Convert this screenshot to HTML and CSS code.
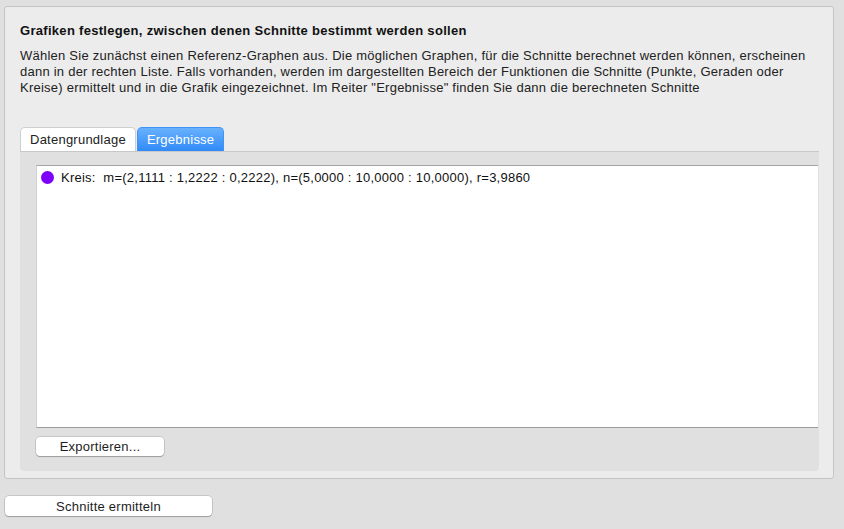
FILE: index.html
```
<html>
	<head>
		<link rel="stylesheet" href="styles.css">
	</head>
	<body>
		<div class="panel">
			<div class="panel__title">Grafiken festlegen, zwischen denen Schnitte bestimmt werden sollen</div>
			<div class="panel__text">Wählen Sie zunächst einen Referenz-Graphen aus. Die möglichen Graphen, für die Schnitte berechnet werden können, erscheinen<br>dann in der rechten Liste. Falls vorhanden, werden im dargestellten Bereich der Funktionen die Schnitte (Punkte, Geraden oder<br>Kreise) ermittelt und in die Grafik eingezeichnet. Im Reiter "Ergebnisse" finden Sie dann die berechneten Schnitte</div>
			<div class="tabs">
				<div class="tab">Datengrundlage</div>
				<div class="tab tab--active">Ergebnisse</div>
			</div>
			<div class="tab-panel">
				<div class="result-list">
					<div class="result-item">
						<span class="result-item__dot"></span>
						<span>Kreis:&nbsp; m=(2,1111 : 1,2222 : 0,2222), n=(5,0000 : 10,0000 : 10,0000), r=3,9860</span>
					</div>
				</div>
				<button type="button" class="push-button push-button--export">Exportieren...</button>
			</div>
		</div>
		<button type="button" class="push-button push-button--run">Schnitte ermitteln</button>
	</body>
</html>
```

FILE: styles.css
```
body {
	margin: 0;
	background: #e0e0e0;
	font-family: "Liberation Sans", Arial, sans-serif;
	font-size: 13px;
	letter-spacing: 0.24px;
	color: #1d1d1d;
}
.panel {
	box-sizing: border-box;
	margin: 6px 0 0 4px;
	width: 830px;
	height: 473px;
	padding: 16px 14px 0 15px;
	background: #ececec;
	border: 1px solid #c4c4c4;
	border-radius: 3px;
}
.panel__title {
	font-weight: bold;
	line-height: 16px;
	letter-spacing: 0.3px;
	color: #111;
}
.panel__text {
	margin-top: 9px;
	line-height: 16px;
	color: #222;
}
.tabs {
	display: flex;
	margin-top: 31px;
	height: 24px;
}
.tab {
	box-sizing: border-box;
	height: 24px;
	padding: 0 9px;
	line-height: 23px;
	background: #fff;
	border: 1px solid #cfcfcf;
	border-bottom: 0;
	border-radius: 5px 5px 0 0;
	color: #222;
}
.tab--active {
	margin-left: 1px;
	border-color: #3e95f9;
	background: linear-gradient(#69b1fd, #2f8af7);
	color: #fff;
}
.tab-panel {
	box-sizing: border-box;
	height: 320px;
	padding: 13px 0 0 16px;
	background: #e0e0e0;
	border-top: 1px solid #c8c8c8;
	border-radius: 0 0 4px 4px;
}
.result-list {
	box-sizing: border-box;
	width: 782px;
	height: 263px;
	background: #fff;
	border-top: 1px solid #a4a4a4;
	border-bottom: 1px solid #9a9a9a;
	border-left: 1px solid #d0d0d0;
}
.result-item {
	display: flex;
	align-items: center;
	height: 22px;
	padding-left: 4px;
	color: #111;
}
.result-item__dot {
	width: 13px;
	height: 13px;
	margin-right: 7px;
	border-radius: 50%;
	background: #7d00f8;
}
.push-button {
	display: block;
	height: 20px;
	padding: 0;
	border: 0;
	border-radius: 4px;
	background: #fff;
	box-shadow: 0 0 0 0.5px rgba(0,0,0,0.22), 0 1px 1px rgba(0,0,0,0.22);
	font-family: "Liberation Sans", Arial, sans-serif;
	font-size: 13px;
	letter-spacing: 0.24px;
	color: #1d1d1d;
}
.push-button--export {
	margin-top: 9px;
	width: 128px;
	height: 19px;
}
.push-button--run {
	margin: 17px 0 0 5px;
	width: 207px;
}
```
